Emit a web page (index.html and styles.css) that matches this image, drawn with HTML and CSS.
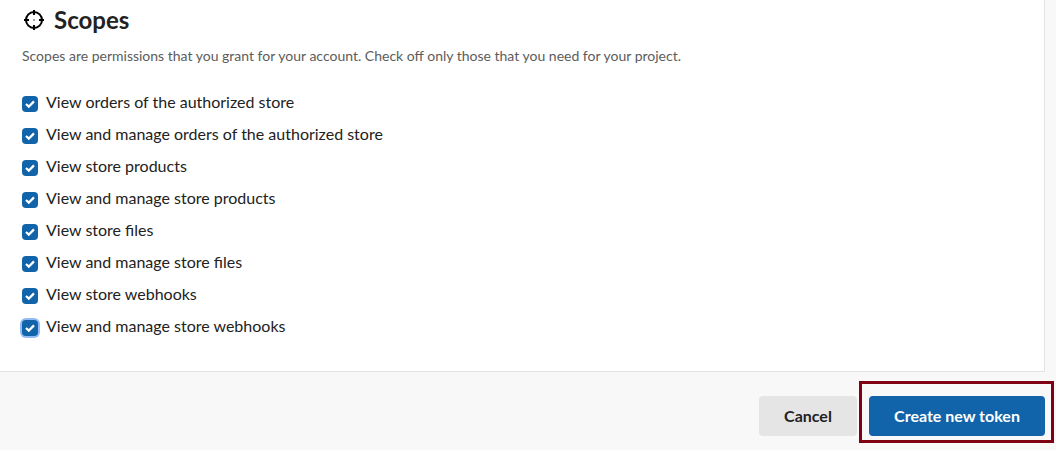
FILE: index.html
```html
<!DOCTYPE html>
<html lang="en">
<head>
  <meta charset="UTF-8">
  <meta name="viewport" content="width=device-width, initial-scale=1.0">
  <title>Create new token</title>
  <link rel="stylesheet" href="styles.css">
</head>
<body>
  <form class="token-form">
    <section class="card">
      <h2 class="title">
        <svg class="title-icon" viewBox="0 0 24 24" aria-hidden="true">
          <circle cx="12" cy="12" r="8" />
          <path d="M12 2v5M12 17v5M2 12h5M17 12h5" />
          <rect x="11.4" y="11.4" width="1.2" height="1.2" />
        </svg>
        Scopes
      </h2>
      <p class="subtitle">Scopes are permissions that you grant for your account. Check off only those that you need for your project.</p>

      <div class="scopes">
        <label class="scope"><input type="checkbox" class="checkbox" checked><span>View orders of the authorized store</span></label>
        <label class="scope"><input type="checkbox" class="checkbox" checked><span>View and manage orders of the authorized store</span></label>
        <label class="scope"><input type="checkbox" class="checkbox" checked><span>View store products</span></label>
        <label class="scope"><input type="checkbox" class="checkbox" checked><span>View and manage store products</span></label>
        <label class="scope"><input type="checkbox" class="checkbox" checked><span>View store files</span></label>
        <label class="scope"><input type="checkbox" class="checkbox" checked><span>View and manage store files</span></label>
        <label class="scope"><input type="checkbox" class="checkbox" checked><span>View store webhooks</span></label>
        <label class="scope"><input type="checkbox" class="checkbox focused" checked><span>View and manage store webhooks</span></label>
      </div>
    </section>

    <footer class="actions">
      <button type="button" class="btn btn-cancel">Cancel</button>
      <div class="highlight">
        <button type="submit" class="btn btn-primary">Create new token</button>
      </div>
    </footer>
  </form>
</body>
</html>
```
FILE: styles.css
```css
* {
  box-sizing: border-box;
  margin: 0;
  padding: 0;
}

body {
  background: #f8f8f8;
  color: #222222;
  font-family: Lato, 'Liberation Sans', sans-serif;
  font-size: 16px;
  line-height: 24px;
}

.token-form {
  padding-right: 11px;
}

.card {
  background: #ffffff;
  border: 1px solid #e3e3e3;
  border-width: 0 1px 1px 0;
  padding: 4px 22px 33px;
}

.title {
  display: flex;
  align-items: center;
  gap: 8px;
  font-size: 24px;
  font-weight: 700;
  line-height: 32px;
}

.title-icon {
  width: 24px;
  height: 24px;
  fill: none;
  stroke: #000000;
  stroke-width: 2;
}

.title-icon rect {
  fill: #000000;
  stroke: none;
}

.subtitle {
  margin-top: 10px;
  font-size: 14px;
  line-height: 20px;
  color: #5c5c5c;
}

.scopes {
  display: flex;
  flex-direction: column;
  align-items: flex-start;
  gap: 8px;
  margin-top: 24px;
}

.scope {
  display: flex;
  gap: 8px;
  cursor: pointer;
}

.checkbox {
  appearance: none;
  flex-shrink: 0;
  width: 16px;
  height: 16px;
  margin-top: 6px;
  border-radius: 4px;
  background: #e5e5e5;
  cursor: pointer;
}

.checkbox:checked {
  background: #1164a9 url("data:image/svg+xml,%3Csvg xmlns='http://www.w3.org/2000/svg' viewBox='0 0 16 16'%3E%3Cpath d='M4 8l2.8 2.6L12 5.4' fill='none' stroke='white' stroke-width='2.2'/%3E%3C/svg%3E") center / 16px no-repeat;
}

.checkbox:focus,
.checkbox.focused {
  outline: none;
  box-shadow: 0 0 0 2px #93bbf5;
}

/* Buttons */
.actions {
  display: flex;
  justify-content: flex-end;
  gap: 12px;
  padding: 24px 0 14px;
}

.btn {
  height: 40px;
  padding: 0 24px;
  border: none;
  border-radius: 4px;
  font: inherit;
  font-weight: 700;
  cursor: pointer;
}

.btn-cancel {
  min-width: 98px;
  background: #e5e5e5;
  color: #222222;
}

.btn-primary {
  min-width: 176px;
  background: #1164a9;
  color: #ffffff;
}

.highlight {
  position: relative;
}

.highlight::after {
  content: '';
  position: absolute;
  inset: -15px -9px -7px -10px;
  border: 3px solid #800014;
  pointer-events: none;
}
```
